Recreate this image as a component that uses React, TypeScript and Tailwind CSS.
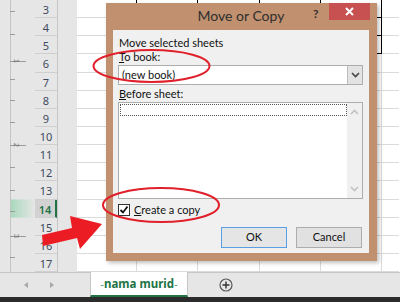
import React from "react";

const rows = [3, 4, 5, 6, 7, 8, 9, 10, 11, 12, 13, 14, 15, 16, 17];
const colWidths = [60, 61, 62, 61, 61, 17];
const ticks = [11, 34, 79, 100, 122, 167, 190, 211, 257];
const rowH = 272 / 15;

const Ruler = () => (
    <svg width="35" height="272" className="shrink-0">
        <defs>
            <linearGradient id="sel" x1="0" x2="1" y1="0" y2="0">
                <stop offset="0" stopColor="#a9d9bd" />
                <stop offset="1" stopColor="#e6e6e6" />
            </linearGradient>
        </defs>
        <rect x="11" y={rowH * 11} width="24" height={rowH} fill="url(#sel)" />
        <line x1="10.5" y1="0" x2="10.5" y2="272" stroke="#c4c4c4" />
        {ticks.map((y) => (
            <line key={y} x1="10" y1={y + 0.5} x2="15" y2={y + 0.5} stroke="#9a9a9a" />
        ))}
        {[61, 145, 236].map((y, i) => (
            <g key={y}>
                <line x1="10" y1={y + 0.5} x2="26" y2={y + 0.5} stroke="#9a9a9a" />
                <text
                    x="13"
                    y={y + 3}
                    fontSize="7"
                    fill="#6a6a6a"
                    fontFamily="Liberation Sans, sans-serif"
                    transform={`rotate(90 16 ${y + 1})`}
                >
                    {i + 1}
                </text>
            </g>
        ))}
    </svg>
);

const SheetGrid = () => (
    <div className="flex-1 bg-white flex flex-col">
        {rows.map((r, ri) => (
            <div key={r} className="flex flex-1">
                {colWidths.map((w, ci) => {
                    const black = ri <= 2 && ci <= 4;
                    const bottomBlack = ri <= 2 && ci >= 1 && ci <= 4;
                    return (
                        <div
                            key={ci}
                            style={{ width: w }}
                            className={`border-r border-b ${black ? "border-r-black" : "border-r-[#dadada]"} ${
                                bottomBlack ? "border-b-black" : "border-b-[#dadada]"
                            } ${ci === 5 ? "border-r-0" : ""}`}
                        />
                    );
                })}
            </div>
        ))}
    </div>
);

const Chevron = ({ up, color }: { up?: boolean; color: string }) => (
    <svg width="9" height="6" viewBox="0 0 9 6">
        <path
            d={up ? "M1 5 L4.5 1.5 L8 5" : "M1 1 L4.5 4.5 L8 1"}
            fill="none"
            stroke={color}
            strokeWidth="1.6"
        />
    </svg>
);

const MoveOrCopyDialog = () => (
    <div
        className="absolute left-[106px] top-[3px] w-[271px] h-[258px] bg-[#c0906f] shadow-[2px_2px_4px_rgba(0,0,0,0.25)] flex flex-col pl-[7px] pr-[8px] pb-[8px]"
        style={{ fontFamily: 'Lato, "Noto Sans", sans-serif' }}
    >
        <div className="h-[27px] relative flex items-center justify-center shrink-0">
            <span className="text-[14px] text-[#2e2e2e] leading-none mt-[-1px]">Move or Copy</span>
            <span className="absolute left-[200px] top-[2px] text-[12px] font-bold text-[#333]">?</span>
            <div className="absolute right-[-1px] top-0 w-[41px] h-[17px] bg-[#c75050] flex items-center justify-center">
                <svg width="9" height="9" viewBox="0 0 9 9">
                    <path d="M1 1 L8 8 M8 1 L1 8" stroke="white" strokeWidth="2" />
                </svg>
            </div>
        </div>
        <div className="flex-1 bg-[#f0f0f0] flex flex-col pl-[5px] pr-[6px] pt-[6px] text-[11px] text-[#111]">
            <div className="h-[14px] leading-[14px] pl-[1px]">Move selected sheets</div>
            <div className="h-[14px] leading-[14px] pl-[1px]">
                <span className="underline">T</span>o book:
            </div>
            <div className="mt-[1px] h-[20px] bg-white border border-[#adadad] flex">
                <div className="flex-1 pl-[3px] leading-[18px]">(new book)</div>
                <div className="w-[15px] bg-[#e3e3e3] border-l border-[#bcbcbc] flex items-center justify-center">
                    <Chevron color="#444" />
                </div>
            </div>
            <div className="mt-[2px] h-[14px] leading-[14px] pl-[1px]">
                <span className="underline">B</span>efore sheet:
            </div>
            <div className="mt-[1px] h-[97px] bg-white border border-[#adadad] flex">
                <div className="flex-1 pl-[1px] pt-[1px]">
                    <div className="h-[12px] border border-dotted border-[#555]" />
                </div>
                <div className="w-[15px] bg-[#f0f0f0] flex flex-col items-center justify-between py-[6px]">
                    <Chevron up color="#c2c2c2" />
                    <Chevron color="#c2c2c2" />
                </div>
            </div>
            <div className="mt-[4px] h-[14px] flex items-center gap-[4px]">
                <div className="w-[12px] h-[12px] bg-white border border-[#333] flex items-center justify-center">
                    <svg width="10" height="10" viewBox="0 0 10 10">
                        <path d="M1.5 5 L4 7.5 L8.5 1.5" fill="none" stroke="#111" strokeWidth="1.8" />
                    </svg>
                </div>
                <span className="leading-[14px]">
                    <span className="underline">C</span>reate a copy
                </span>
            </div>
            <div className="mt-[10px] flex justify-end gap-[9px] pr-[1px]">
                <button className="w-[66px] h-[21px] border border-[#5a9fe4] bg-[#e5e5e5] text-[11px] text-[#111]">
                    OK
                </button>
                <button className="w-[66px] h-[21px] border border-[#adadad] bg-[#e1e1e1] text-[11px] text-[#111]">
                    Cancel
                </button>
            </div>
        </div>
    </div>
);

const Annotations = () => (
    <svg className="absolute inset-0 pointer-events-none" width="400" height="302">
        <ellipse cx="151.5" cy="66" rx="58" ry="16" fill="none" stroke="#e0202a" strokeWidth="2" />
        <ellipse cx="161" cy="205" rx="58" ry="17" fill="none" stroke="#e0202a" strokeWidth="2" />
        <polygon points="42,235 72,228 70,216 102,224 80,249 77,238 43,246" fill="#ec1c24" />
    </svg>
);

export default function App() {
    return (
        <div
            className="relative w-[400px] h-[302px] overflow-hidden bg-[#e6e6e6] flex flex-col"
            style={{ fontFamily: '"Noto Sans", sans-serif' }}
        >
            <div className="flex h-[272px] shrink-0">
                <Ruler />
                <div className="w-[23px] flex flex-col border-r border-[#c6c6c6]">
                    {rows.map((r) => (
                        <div
                            key={r}
                            className={`flex-1 flex items-center justify-center border-b border-[#cfcfcf] text-[11px] leading-none pt-[2px] ${
                                r === 14
                                    ? "bg-[#d2d2d2] text-[#217346] font-semibold border-r-2 border-r-[#217346]"
                                    : "text-[#3d4a60]"
                            }`}
                        >
                            {r}
                        </div>
                    ))}
                </div>
                <div className="w-[19px]" />
                <SheetGrid />
            </div>
            <div className="h-[25px] flex border-t border-[#c6c6c6] shrink-0">
                <div className="w-[90px] flex items-center">
                    <svg width="60" height="10" className="ml-[22px]">
                        <polygon points="6,2 2,5 6,8" fill="#a8a8a8" />
                        <polygon points="28,2 32,5 28,8" fill="#a8a8a8" />
                    </svg>
                </div>
                <div className="w-[98px] bg-white border-x border-[#c6c6c6] flex items-center justify-center border-b-2 border-b-[#217346] -mt-[1px]">
                    <span className="text-[11.5px] font-bold text-[#217346]">
                        <span className="text-[#5b9a75] font-normal">-</span>nama murid
                        <span className="text-[#5b9a75] font-normal">-</span>
                    </span>
                </div>
                <div className="flex items-center pl-[31px]">
                    <svg width="14" height="14" viewBox="0 0 14 14">
                        <circle cx="7" cy="7" r="6" fill="none" stroke="#5a5a5a" strokeWidth="1.2" />
                        <path d="M7 3.5 V10.5 M3.5 7 H10.5" stroke="#333" strokeWidth="1.4" />
                    </svg>
                </div>
            </div>
            <div className="flex-1 bg-[#2b2b2b]" />
            <MoveOrCopyDialog />
            <Annotations />
        </div>
    );
}
